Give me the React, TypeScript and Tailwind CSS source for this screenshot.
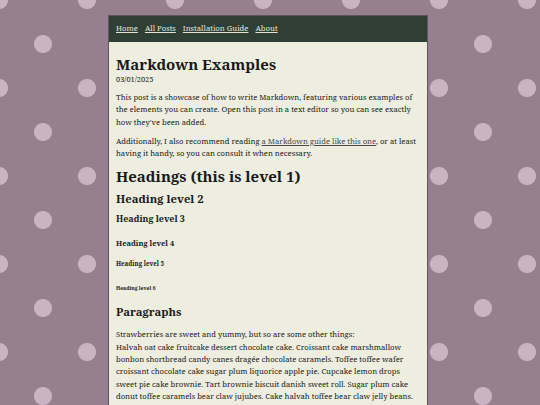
export default function App() {
  const serif = "font-['Noto_Serif','DejaVu_Serif',serif]";
  return (
    <div
      className={`min-h-[405px] w-full bg-[#967f8f] pt-[15px] ${serif} [background-image:radial-gradient(circle,#c9b4c4_8.5px,transparent_9.5px),radial-gradient(circle,#c9b4c4_8.5px,transparent_9.5px)] [background-size:88px_88px] [background-position:-45px_-44px,-1px_0px]`}
    >
      <div className="flex justify-center pr-[4px]">
        <div className="w-[320px] border border-[#5d5558] bg-[#eeeee0] text-[#1a1a1a]">
          <nav className="flex h-[26px] items-center gap-[7px] bg-[#2f3f35] px-[7px] text-[7.7px] text-[#e4e4d4]">
            <a className="underline">Home</a>
            <a className="underline">All Posts</a>
            <a className="underline">Installation Guide</a>
            <a className="underline">About</a>
          </nav>
          <main className="px-[7px] pt-[12px] pb-4">
            <h1 className="text-[15px] leading-[20px] font-bold">Markdown Examples</h1>
            <div className="text-[7.4px] leading-[11px]">03/01/2025</div>
            <p className="mt-[6px] text-[7.65px] leading-[12.3px]">
              This post is a showcase of how to write Markdown, featuring various examples of the
              elements you can create. Open this post in a text editor so you can see exactly how
              they've been added.
            </p>
            <p className="mt-[7px] text-[7.65px] leading-[12.3px]">
              Additionally, I also recommend reading{" "}
              <a className="text-[#4a4a4a] underline">a Markdown guide like this one</a>, or at
              least having it handy, so you can consult it when necessary.
            </p>
            <h1 className="mt-[4px] text-[15px] leading-[26px] font-bold">Headings (this is level 1)</h1>
            <h2 className="text-[11.3px] leading-[20px] font-bold">Heading level 2</h2>
            <h3 className="mt-[1px] text-[8.9px] leading-[18px] font-bold">Heading level 3</h3>
            <h4 className="mt-[8px] text-[7.5px] leading-[14px] font-bold">Heading level 4</h4>
            <h5 className="mt-[8px] text-[6.2px] leading-[12px] font-bold">Heading level 5</h5>
            <h6 className="mt-[13px] text-[5.1px] leading-[10px] font-bold">Heading level 6</h6>
            <h3 className="mt-[9px] text-[11.3px] leading-[20px] font-bold">Paragraphs</h3>
            <p className="mt-[6px] text-[7.65px] leading-[12.3px]">
              Strawberries are sweet and yummy, but so are some other things:
              <br />
              Halvah oat cake fruitcake dessert chocolate cake. Croissant cake marshmallow bonbon
              shortbread candy canes dragée chocolate caramels. Toffee toffee wafer croissant
              chocolate cake sugar plum liquorice apple pie. Cupcake lemon drops sweet pie cake
              brownie. Tart brownie biscuit danish sweet roll. Sugar plum cake donut toffee caramels
              bear claw jujubes. Cake halvah toffee bear claw jelly beans. Toffee jelly beans gummi
              bears biscuit marzipan sesame snaps chocolate cake dragée pie.
            </p>
          </main>
        </div>
      </div>
    </div>
  );
}
